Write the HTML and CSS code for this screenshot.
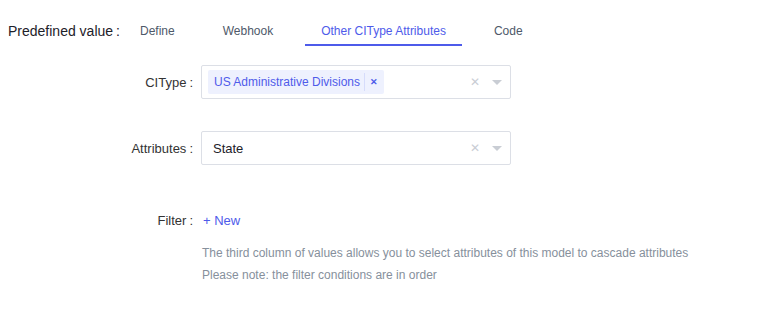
FILE: index.html
```html
<!DOCTYPE html>
<html>
<head>
  <title>Predefined value</title>
  <link rel="stylesheet" href="styles.css">
</head>
<body>
  <div class="panel">
    <div class="predef">
      <span class="predef-label">Predefined value<span class="colon">:</span></span>
      <div class="tabs">
        <div class="tab">Define</div>
        <div class="tab">Webhook</div>
        <div class="tab active">Other CIType Attributes</div>
        <div class="tab">Code</div>
      </div>
    </div>

    <div class="row row-citype">
      <label class="row-label">CIType<span class="colon">:</span></label>
      <div class="select">
        <div class="select-values">
          <span class="tag">US Administrative Divisions<span class="tag-sep"></span><span class="tag-close">&#x2715;</span></span>
        </div>
        <span class="clear">&#x2715;</span>
        <span class="arrow"></span>
      </div>
    </div>

    <div class="row row-attr">
      <label class="row-label">Attributes<span class="colon">:</span></label>
      <div class="select">
        <div class="select-values">
          <span class="value">State</span>
        </div>
        <span class="clear">&#x2715;</span>
        <span class="arrow"></span>
      </div>
    </div>

    <div class="row row-filter">
      <label class="row-label">Filter<span class="colon">:</span></label>
      <a class="new-link">+ New</a>
    </div>

    <div class="help">
      <p>The third column of values allows you to select attributes of this model to cascade attributes</p>
      <p>Please note: the filter conditions are in order</p>
    </div>
  </div>
</body>
</html>
```

FILE: styles.css
```css
body { margin: 0; background: #fff; font-family: "Liberation Sans", Arial, sans-serif; color: #1d2129; }
.panel { padding: 19px 0 0 8px; }
.colon { margin-left: 3px; }

.predef { display: flex; align-items: flex-start; }
.predef-label { font-size: 14px; line-height: 25px; width: 116px; white-space: nowrap; color: #1d2129; }
.tabs { display: flex; gap: 16px; }
.tab { font-size: 12px; line-height: 25px; padding: 0 16px; color: #4e5969; border-bottom: 2px solid transparent; }
.tab.active { color: #4e5bea; border-bottom-color: #4e5bea; }

.row { display: flex; align-items: center; }
.row-label { width: 193px; text-align: right; font-size: 13px; padding-right: 8px; box-sizing: border-box; color: #333; }
.row-citype { margin-top: 19px; }
.row-attr { margin-top: 32px; }
.row-filter { margin-top: 48px; }

.select { width: 310px; height: 34px; box-sizing: border-box; border: 1px solid #dcdfe6; border-radius: 2px; display: flex; align-items: center; padding: 0 6px; }
.select-values { flex: 1; display: flex; align-items: center; }
.tag { display: inline-flex; align-items: center; height: 24px; padding: 0 6px 0 6px; background: #eef1fe; color: #4e5bea; font-size: 12px; border-radius: 2px; }
.tag-sep { width: 1px; height: 18px; background: #d6dcfb; margin: 0 5px 0 4px; }
.tag-close { font-size: 9px; font-weight: bold; }
.value { font-size: 13px; padding-left: 5px; color: #1d2129; }
.clear { color: #c9cdd4; font-size: 12px; margin-right: 12px; }
.arrow { width: 0; height: 0; border-left: 5px solid transparent; border-right: 5px solid transparent; border-top: 5px solid #c9cdd4; margin-right: 2px; }

.new-link { color: #4e5bea; font-size: 13px; margin-left: 2px; }

.help { padding-left: 194px; margin-top: 14px; }
.help p { margin: 0; font-size: 12px; line-height: 22px; color: #86909c; }
```
